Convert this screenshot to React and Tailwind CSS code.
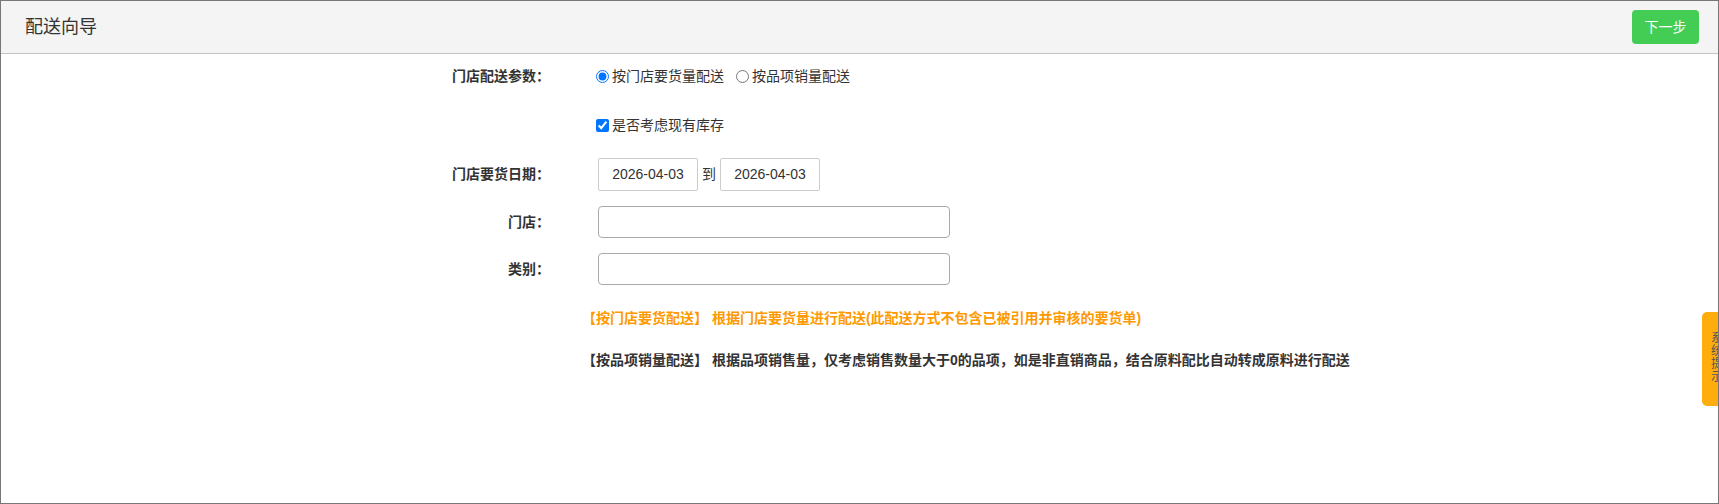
import React from "react";

const font = { fontFamily: '"Liberation Sans", "Noto Sans CJK SC", sans-serif' };

function Label({ children }) {
  return (
    <div className="w-[150px] shrink-0 text-right text-[14px] font-bold text-[#333] pr-[2px]">
      {children}
    </div>
  );
}

export default function App() {
  return (
    <div
      className="relative w-[1719px] h-[504px] border border-[#777] bg-white overflow-hidden box-border"
      style={font}
    >
      {/* header */}
      <div className="h-[52px] bg-[#f4f4f4] border-b border-[#c4c4c4] flex items-center justify-between pl-[24px] pr-[19px] box-content">
        <div className="text-[18px] text-[#333] leading-none">配送向导</div>
        <button className="w-[67px] h-[34px] rounded-[4px] bg-[#44cd55] text-white text-[14px] leading-none">
          下一步
        </button>
      </div>

      {/* form */}
      <div className="flex flex-col pl-[401px]">
        <div className="flex items-center h-[34px] mt-[5px]">
          <Label>门店配送参数：</Label>
          <div className="flex items-center ml-[44px] text-[14px] text-[#333]">
            <input type="radio" name="m" defaultChecked className="m-0 w-[13px] h-[13px] accent-[#0075ff]" />
            <span className="ml-[3px]">按门店要货量配送</span>
            <input type="radio" name="m" className="m-0 ml-[12px] w-[13px] h-[13px]" />
            <span className="ml-[3px]">按品项销量配送</span>
          </div>
        </div>

        <div className="flex items-center h-[34px] mt-[15px]">
          <div className="w-[150px] shrink-0" />
          <div className="flex items-center ml-[44px] text-[14px] text-[#333]">
            <input type="checkbox" defaultChecked className="m-0 w-[13px] h-[13px] accent-[#0075ff]" />
            <span className="ml-[3px]">是否考虑现有库存</span>
          </div>
        </div>

        <div className="flex items-center h-[33px] mt-[16px]">
          <Label>门店要货日期：</Label>
          <div className="flex items-center ml-[46px] text-[14px] text-[#333]">
            <div className="w-[100px] h-[33px] border border-[#ccc] rounded-[2px] flex items-center justify-center box-border">
              2026-04-03
            </div>
            <span className="mx-[4px]">到</span>
            <div className="w-[100px] h-[33px] border border-[#ccc] rounded-[2px] flex items-center justify-center box-border">
              2026-04-03
            </div>
          </div>
        </div>

        <div className="flex items-center h-[32px] mt-[15px]">
          <Label>门店：</Label>
          <input className="ml-[46px] w-[352px] h-[32px] border border-[#aaa] rounded-[4px] box-border outline-none" />
        </div>

        <div className="flex items-center h-[32px] mt-[15px]">
          <Label>类别：</Label>
          <input className="ml-[46px] w-[352px] h-[32px] border border-[#aaa] rounded-[4px] box-border outline-none" />
        </div>

        <div className="flex items-center h-[20px] mt-[23px]">
          <div className="w-[150px] shrink-0" />
          <div className="ml-[30px] text-[14px] font-bold text-[#ff9900] whitespace-nowrap">
            【按门店要货配送】 根据门店要货量进行配送(此配送方式不包含已被引用并审核的要货单)
          </div>
        </div>

        <div className="flex items-center h-[20px] mt-[22px]">
          <div className="w-[150px] shrink-0" />
          <div className="ml-[30px] text-[14px] font-bold text-[#333] whitespace-nowrap">
            【按品项销量配送】 根据品项销售量，仅考虑销售数量大于0的品项，如是非直销商品，结合原料配比自动转成原料进行配送
          </div>
        </div>
      </div>

      {/* side tab */}
      <div className="absolute left-[1701px] top-[311px] w-[30px] h-[94px] rounded-l-[5px] bg-[#ffad0d] pl-[9px] pt-[20px] text-[12px] leading-[13px] text-[#555]">
        <div>系</div>
        <div>统</div>
        <div>提</div>
        <div>示</div>
      </div>
    </div>
  );
}
